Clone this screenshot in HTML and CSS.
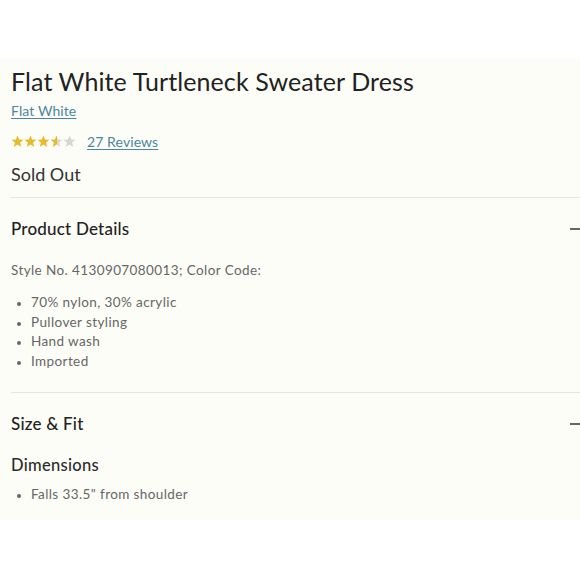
FILE: index.html
```html
<!DOCTYPE html>
<html>
<head>
<meta charset="utf-8">
<link rel="stylesheet" href="styles.css">
</head>
<body>
<div class="panel">
  <h1 class="title">Flat White Turtleneck Sweater Dress</h1>
  <a class="link color-link" href="#">Flat White</a>
  <div class="rating">
    <svg class="stars" width="66" height="13" viewBox="0 0 66 13">
      <defs>
        <linearGradient id="half">
          <stop offset="50%" stop-color="#e8b92c"/>
          <stop offset="50%" stop-color="#d6d6d3"/>
        </linearGradient>
        <path id="star" d="M6.5 0.5 L8.1 4.6 L12.5 4.8 L9.1 7.6 L10.2 11.9 L6.5 9.5 L2.8 11.9 L3.9 7.6 L0.5 4.8 L4.9 4.6 Z"/>
      </defs>
      <use href="#star" x="0" fill="#e8b92c"/>
      <use href="#star" x="13" fill="#e8b92c"/>
      <use href="#star" x="26" fill="#e8b92c"/>
      <use href="#star" x="39" fill="url(#half)"/>
      <use href="#star" x="52" fill="#d6d6d3"/>
    </svg>
    <a class="link" href="#">27 Reviews</a>
  </div>
  <div class="status">Sold Out</div>

  <section class="section">
    <div class="section-head">
      <h2 class="section-title">Product Details</h2>
      <span class="minus"></span>
    </div>
    <p class="style-no">Style No. 4130907080013; Color Code:</p>
    <ul class="bullets">
      <li>70% nylon, 30% acrylic</li>
      <li>Pullover styling</li>
      <li>Hand wash</li>
      <li>Imported</li>
    </ul>
  </section>

  <section class="section last">
    <div class="section-head">
      <h2 class="section-title">Size &amp; Fit</h2>
      <span class="minus"></span>
    </div>
    <h3 class="sub-title">Dimensions</h3>
    <ul class="bullets">
      <li>Falls 33.5" from shoulder</li>
    </ul>
  </section>
</div>
</body>
</html>
```

FILE: styles.css
```css
* { box-sizing: border-box; }
html, body { margin: 0; padding: 0; background: #ffffff; }
body {
  font-family: Lato, "Noto Sans", sans-serif;
  color: #2b2b2b;
  width: 580px;
  overflow: hidden;
}
.panel {
  margin-top: 58px;
  width: 600px;
  background: #fdfdf8;
  padding: 6px 0 15px 11px;
}
.title {
  margin: 0;
  font-size: 25px;
  font-weight: 400;
  letter-spacing: 0.1px;
  line-height: 34px;
  color: #222;
}
.link {
  color: #4a879f;
  text-decoration: underline;
  text-underline-offset: 2px;
  font-size: 14px;
  letter-spacing: 0.1px;
}
.color-link {
  display: inline-block;
  margin-top: 4px;
  line-height: 18px;
}
.rating {
  display: flex;
  align-items: center;
  gap: 10px;
  margin-top: 12px;
  height: 18px;
}
.stars { display: block; }
.status {
  margin-top: 13px;
  font-size: 18px;
  line-height: 22px;
  color: #333;
  letter-spacing: 0;
  padding-bottom: 12px;
}
.section {
  border-top: 1px solid #e6e6e1;
  padding-top: 20px;
  padding-bottom: 21px;
}
.section.last { padding-bottom: 0; }
.section-head {
  display: flex;
  align-items: center;
  justify-content: space-between;
  padding-right: 18px;
  height: 22px;
}
.section-title {
  margin: 0;
  font-size: 17px;
  font-weight: 500;
  line-height: 22px;
  color: #222;
  letter-spacing: 0.2px;
}
.minus {
  width: 12px;
  height: 2px;
  background: #666;
}
.style-no {
  margin: 20px 0 0;
  font-size: 13.5px;
  line-height: 20px;
  color: #666;
  letter-spacing: 0.4px;
}
.bullets {
  margin: 13px 0 0;
  padding: 0 0 0 20px;
  font-size: 13.5px;
  line-height: 19.6px;
  color: #666;
  letter-spacing: 0.4px;
}
.bullets li::marker { font-size: 11px; }
.sub-title {
  margin: 19px 0 0;
  font-size: 16.5px;
  font-weight: 500;
  line-height: 22px;
  color: #2b2b2b;
  letter-spacing: 0.3px;
}
.section.last .bullets { margin-top: 9px; }
```
